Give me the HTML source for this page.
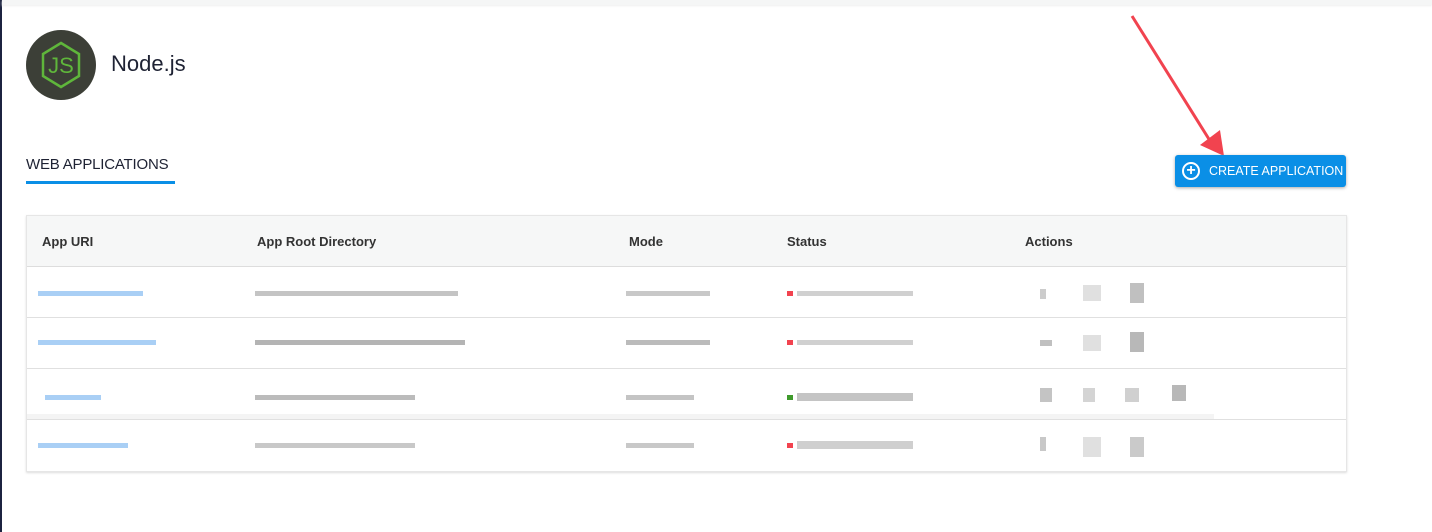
<!DOCTYPE html>
<html><head><style>
body{margin:0;width:1432px;height:532px;background:#fff;font-family:"Liberation Sans",sans-serif;position:relative;overflow:hidden}
.a{position:absolute;white-space:nowrap}
.b{position:absolute;height:5px}
</style></head><body>
<div class="a" style="left:0;top:0;width:2px;height:532px;background:#1c2340"></div>
<div class="a" style="left:2px;top:0;width:1430px;height:5px;background:#f5f6f6;box-shadow:0 1px 2px #eee"></div>
<div class="a" style="left:26px;top:30px;width:70px;height:70px;border-radius:50%;background:#3c3f37"></div>
<svg class="a" style="left:26px;top:30px" width="70" height="70" viewBox="0 0 70 70">
<polygon points="35,13 53,24 53,46 35,57 17,46 17,24" fill="none" stroke="#5fb63b" stroke-width="2.5"/>
<text x="35" y="43" font-family="Liberation Sans" font-size="22" fill="#5fb63b" text-anchor="middle">JS</text>
</svg>
<div class="a" style="left:111px;top:51px;font-size:22px;color:#1e2233">Node.js</div>
<div class="a" style="left:26px;top:156px;font-size:15px;color:#1e2233;letter-spacing:-0.2px">WEB APPLICATIONS</div>
<div class="a" style="left:26px;top:181px;width:149px;height:3px;background:#0a8fe6"></div>
<svg class="a" style="left:1120px;top:10px" width="110" height="150"><line x1="12" y1="6" x2="92" y2="134" stroke="#f1434f" stroke-width="3"/><polygon points="80,135 104,146 100,120" fill="#f1434f"/></svg>
<div class="a" style="left:1175px;top:155px;width:171px;height:32px;background:#0a8fe6;border-radius:3px;color:#fff;font-size:12.5px;line-height:32px;box-shadow:0 1px 3px #aaa">
<span class="a" style="left:7px;top:7px;width:14px;height:14px;border:2px solid #fff;border-radius:50%;line-height:14px;text-align:center;font-size:16px;font-weight:bold">+</span>
<span class="a" style="left:34px;top:0">CREATE APPLICATION</span></div>
<div class="a" style="left:26px;top:215px;width:1319px;height:255px;border:1px solid #e6e6e6;box-shadow:0 1px 2px #ddd"></div>
<div class="a" style="left:27px;top:216px;width:1319px;height:50px;background:#f6f7f7;border-bottom:1px solid #ddd"></div>
<div class="a" style="top:234px;left:42px;font-size:13px;font-weight:bold;color:#333">App URI</div>
<div class="a" style="top:234px;left:257px;font-size:13px;font-weight:bold;color:#333">App Root Directory</div>
<div class="a" style="top:234px;left:629px;font-size:13px;font-weight:bold;color:#333">Mode</div>
<div class="a" style="top:234px;left:787px;font-size:13px;font-weight:bold;color:#333">Status</div>
<div class="a" style="top:234px;left:1025px;font-size:13px;font-weight:bold;color:#333">Actions</div>
<div class="a" style="left:27px;top:317px;width:1319px;height:1px;background:#e0e0e0"></div>
<div class="a" style="left:27px;top:368px;width:1319px;height:1px;background:#e0e0e0"></div>
<div class="a" style="left:27px;top:414px;width:1187px;height:5px;background:#f4f4f4"></div>
<div class="a" style="left:27px;top:419px;width:1319px;height:1px;background:#e0e0e0"></div>

<div class="b" style="left:38px;top:291px;width:105px;background:#a9cff5"></div>
<div class="b" style="left:255px;top:291px;width:203px;background:#c4c4c4"></div>
<div class="b" style="left:626px;top:291px;width:84px;background:#c8c8c8"></div>
<div class="b" style="left:787px;top:291px;width:6px;background:#f2434f"></div>
<div class="b" style="left:797px;top:291px;width:116px;background:#d0d0d0"></div>

<div class="b" style="left:38px;top:340px;width:118px;background:#a9cff5"></div>
<div class="b" style="left:255px;top:340px;width:210px;background:#b4b4b4"></div>
<div class="b" style="left:626px;top:340px;width:84px;background:#bbb"></div>
<div class="b" style="left:787px;top:340px;width:6px;background:#f2434f"></div>
<div class="b" style="left:797px;top:340px;width:116px;background:#d0d0d0"></div>

<div class="b" style="left:45px;top:395px;width:56px;background:#a9cff5"></div>
<div class="b" style="left:255px;top:395px;width:160px;background:#bbb"></div>
<div class="b" style="left:626px;top:395px;width:68px;background:#c4c4c4"></div>
<div class="b" style="left:787px;top:395px;width:6px;background:#3f9a2c"></div>
<div class="b" style="left:797px;top:393px;width:116px;height:8px;background:#c4c4c4"></div>

<div class="b" style="left:38px;top:443px;width:90px;background:#a9cff5"></div>
<div class="b" style="left:255px;top:443px;width:160px;background:#c8c8c8"></div>
<div class="b" style="left:626px;top:443px;width:68px;background:#c8c8c8"></div>
<div class="b" style="left:787px;top:443px;width:6px;background:#f2434f"></div>
<div class="b" style="left:797px;top:441px;width:116px;height:8px;background:#cfcfcf"></div>

<div class="b" style="left:1040px;top:289px;width:6px;height:10px;background:#ccc"></div>
<div class="b" style="left:1083px;top:285px;width:18px;height:16px;background:#e0e0e0"></div>
<div class="b" style="left:1130px;top:283px;width:14px;height:20px;background:#c0c0c0"></div>
<div class="b" style="left:1040px;top:340px;width:12px;height:6px;background:#c0c0c0"></div>
<div class="b" style="left:1083px;top:335px;width:18px;height:16px;background:#e0e0e0"></div>
<div class="b" style="left:1130px;top:332px;width:14px;height:20px;background:#b8b8b8"></div>
<div class="b" style="left:1040px;top:388px;width:12px;height:14px;background:#c4c4c4"></div>
<div class="b" style="left:1083px;top:388px;width:12px;height:14px;background:#d4d4d4"></div>
<div class="b" style="left:1125px;top:388px;width:14px;height:14px;background:#d0d0d0"></div>
<div class="b" style="left:1172px;top:385px;width:14px;height:16px;background:#b8b8b8"></div>
<div class="b" style="left:1040px;top:437px;width:6px;height:14px;background:#c8c8c8"></div>
<div class="b" style="left:1083px;top:437px;width:18px;height:20px;background:#e0e0e0"></div>
<div class="b" style="left:1130px;top:437px;width:14px;height:20px;background:#cacaca"></div>
</body></html>
